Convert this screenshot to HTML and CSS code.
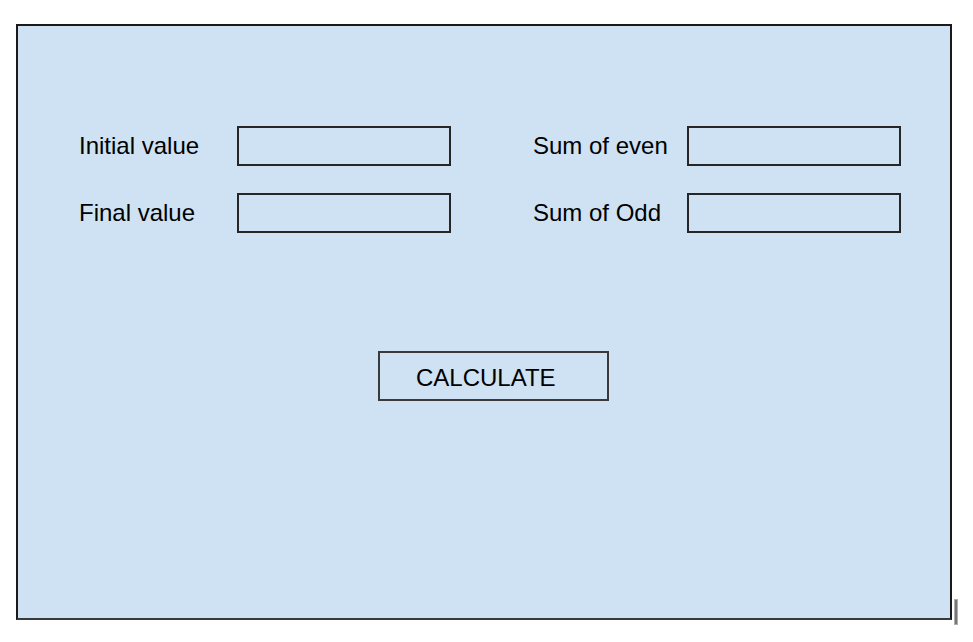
FILE: index.html
```html
<!DOCTYPE html>
<html lang="en">
<head>
<meta charset="utf-8">
<title>Even / Odd Sum Calculator</title>
<link rel="stylesheet" href="styles.css">
</head>
<body>
  <main class="panel">
    <div class="fields">
      <div class="group group-in">
        <label class="label" for="initial">Initial value</label>
        <input class="box" id="initial" type="text">
        <label class="label" for="final">Final value</label>
        <input class="box" id="final" type="text">
      </div>
      <div class="group group-out">
        <label class="label" for="even">Sum of even</label>
        <input class="box" id="even" type="text" readonly>
        <label class="label" for="odd">Sum of Odd</label>
        <input class="box" id="odd" type="text" readonly>
      </div>
    </div>
    <button class="calc" type="button">CALCULATE</button>
  </main>
  <span class="caret"></span>
</body>
</html>
```

FILE: styles.css
```css
* {
  box-sizing: border-box;
}

body {
  margin: 0;
  background: #ffffff;
  font-family: "Liberation Sans", Arial, sans-serif;
  color: #000000;
  display: flex;
  align-items: flex-end;
  height: 642px;
  padding: 24px 0 22px 16px;
}

.panel {
  width: 936px;
  height: 596px;
  background: #cfe2f3;
  border: 2px solid #1a1a1a;
  border-bottom-color: #3a3a3a;
  padding: 100px 0 0 61px;
  display: flex;
  flex-direction: column;
  align-items: flex-start;
}

.fields {
  display: flex;
  gap: 82px;
}

.group {
  display: grid;
  row-gap: 27px;
  align-items: center;
}

.group-in {
  grid-template-columns: 158px 214px;
}

.group-out {
  grid-template-columns: 154px 214px;
}

.label {
  font-size: 24px;
  line-height: 28px;
  padding-bottom: 1px;
}

.box {
  width: 214px;
  height: 40px;
  margin: 0;
  background: transparent;
  border: 2px solid #262626;
  border-radius: 0;
  font: inherit;
  font-size: 20px;
  padding: 0 8px;
}

.calc {
  margin: 118px 0 0 299px;
  width: 231px;
  height: 50px;
  background: transparent;
  border: 2px solid #3a3a3a;
  border-radius: 0;
  font-family: inherit;
  font-size: 24px;
  color: #000000;
  text-align: left;
  padding: 3px 0 0 36px;
}

.caret {
  width: 4px;
  height: 26px;
  margin: 0 0 -5px 2px;
  background: #777777;
  border: 1px solid #b0b0b0;
}
```
